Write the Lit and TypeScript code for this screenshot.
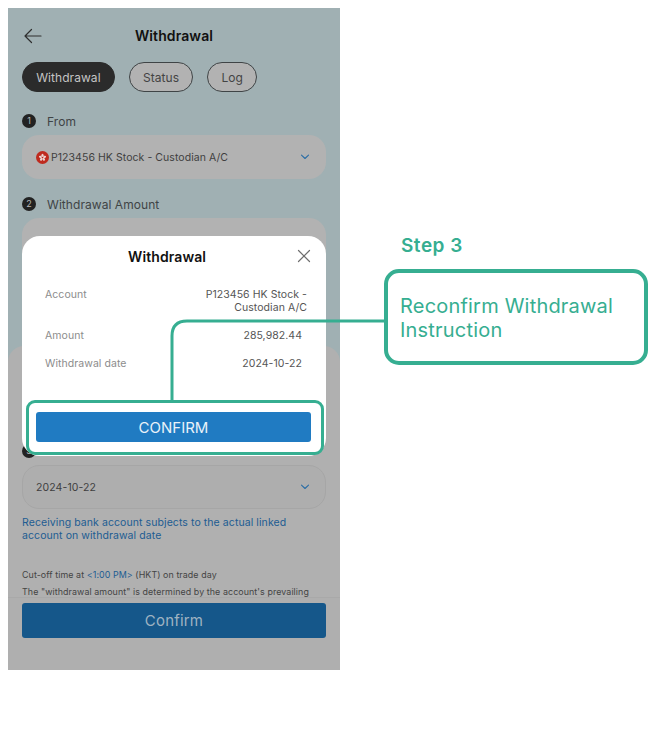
import { LitElement, html, css, svg } from "lit";
import { customElement } from "lit/decorators.js";

const chevron = html`<svg class="chev" width="12" height="8" viewBox="0 0 12 8" fill="none"><path d="M2.500 2.200l3.500 3.300 3.500-3.300" stroke="#2b6ea6" stroke-width="1.100" stroke-linecap="round" stroke-linejoin="round"/></svg>`;

const petals = [0, 72, 144, 216, 288].map(
  (a) => svg`<ellipse cx="7" cy="4.700" rx="1.200" ry="1.700" fill="#ecd3d0" transform="rotate(${a} 7 7)"/>`
);

@customElement("app-root")
export class AppRoot extends LitElement {
  static styles = css`
    :host {
      display: block;
      position: relative;
      width: 670px;
      height: 731px;
      overflow: hidden;
      background: #fff;
      font-family: Inter, "Liberation Sans", sans-serif;
      color: #3a3a3a;
    }
    .phone {
      position: relative;
      margin: 8px 0 0 8px;
      width: 332px;
      height: 662px;
      overflow: hidden;
      background: #a0b0b3;
      display: flex;
      flex-direction: column;
    }
    .top {
      height: 338px;
      flex: none;
      padding: 0 14px;
      box-sizing: border-box;
    }
    .head {
      height: 54px;
      display: flex;
      align-items: center;
      justify-content: center;
      position: relative;
    }
    .back {
      position: absolute;
      left: 1px;
      top: 19px;
    }
    .title,
    .mhead {
      font-size: 14px;
      font-weight: 600;
      color: #111;
      letter-spacing: 0.1px;
    }
    .tabs {
      display: flex;
      gap: 14px;
      height: 30px;
    }
    .tab {
      box-sizing: border-box;
      height: 30px;
      padding: 0 13.200px;
      border: 1px solid #3f4446;
      border-radius: 15px;
      background: #b2b2b2;
      font-size: 12px;
      line-height: 30px;
      color: #444;
      letter-spacing: 0.06px;
    }
    .tab.on {
      background: #2b2b2b;
      border-color: #2b2b2b;
      color: #c4c4c4;
    }
    .step {
      display: flex;
      align-items: center;
      gap: 11px;
      height: 16px;
      font-size: 12px;
      color: #3f4446;
      letter-spacing: 0.06px;
    }
    .num {
      width: 14px;
      height: 14px;
      border-radius: 50%;
      background: #222;
      color: #b8b8b8;
      font-size: 9px;
      line-height: 14px;
      text-align: center;
      flex: none;
    }
    .s1 {
      margin-top: 21px;
    }
    .s2 {
      margin-top: 17px;
    }
    .field {
      box-sizing: border-box;
      height: 44px;
      margin-top: 6px;
      border-radius: 17px;
      background: #b2b2b2;
      padding: 0 15px 0 14px;
      display: flex;
      align-items: center;
      justify-content: space-between;
      font-size: 10.500px;
      color: #3f3f3f;
      letter-spacing: 0.06px;
    }
    .acct {
      display: flex;
      align-items: center;
      gap: 2px;
    }
    .chev {
      flex: none;
    }
    .amount {
      height: 90px;
    }
    .sheet {
      flex: 1;
      background: #b0b0b0;
      border-radius: 16px 16px 0 0;
      padding: 97px 14px 0;
      position: relative;
      display: flex;
      flex-direction: column;
      overflow: hidden;
    }
    .date {
      flex: none;
      background: #aeaeae;
      border: 1px solid #a6a6a6;
      padding: 0 14px 0 13px;
      letter-spacing: 0.1px;
    }
    .note {
      margin-top: 8px;
      font-size: 10.500px;
      line-height: 12.500px;
      color: #215c92;
      letter-spacing: 0.08px;
    }
    .fine {
      font-size: 8.900px;
      line-height: 12px;
      color: #444;
      letter-spacing: 0.08px;
      white-space: nowrap;
    }
    .cut {
      margin-top: 27px;
    }
    .fine b {
      font-weight: 400;
      color: #215c92;
    }
    .rule {
      margin-top: 5px;
    }
    .foot {
      position: absolute;
      left: 0;
      right: 0;
      bottom: 0;
      height: 73px;
      background: #afafaf;
      border-top: 1px solid #a9a9a9;
      box-sizing: border-box;
      padding: 5px 14px 0;
    }
    .big {
      height: 35px;
      border-radius: 3px;
      background: #15578a;
      color: #9fb3c2;
      font-size: 15px;
      line-height: 35px;
      text-align: center;
      letter-spacing: 0.2px;
    }
    .modal {
      position: absolute;
      left: 22px;
      top: 236px;
      width: 304px;
      height: 220px;
      background: #fff;
      border-radius: 18px;
      box-sizing: border-box;
    }
    .mhead {
      height: 41px;
      display: flex;
      align-items: center;
      padding-left: 106px;
      position: relative;
    }
    .close {
      position: absolute;
      left: 275px;
      top: 13px;
    }
    .rows {
      padding: 11px 19px 0 23px;
      font-size: 10.500px;
      line-height: 13px;
      letter-spacing: 0.06px;
    }
    .row {
      display: flex;
      justify-content: space-between;
      color: #555;
    }
    .row span:first-child {
      color: #8c8c8c;
    }
    .row.a {
      padding-right: 5px;
      margin-top: 15px;
    }
    .val1 {
      text-align: right;
    }
    .mbtn {
      position: absolute;
      left: 14px;
      top: 176px;
      width: 275px;
      height: 30px;
      border-radius: 3px;
      background: #207bc2;
      color: #e9f2f9;
      font-size: 15px;
      line-height: 32px;
      text-align: center;
    }
    .hilite {
      position: absolute;
      left: 26px;
      top: 400px;
      width: 298px;
      height: 54.500px;
      box-sizing: border-box;
      border: 3.500px solid #36ae91;
      border-radius: 9px;
    }
    .wire {
      position: absolute;
      left: 169px;
      top: 318px;
    }
    .stepname {
      position: absolute;
      left: 401px;
      top: 235px;
      font-size: 19px;
      line-height: 22px;
      font-weight: 600;
      color: #36ae91;
      letter-spacing: 0.5px;
    }
    .callout {
      position: absolute;
      left: 384px;
      top: 269px;
      width: 264px;
      height: 96px;
      box-sizing: border-box;
      border: 4px solid #36ae91;
      border-radius: 15px;
      padding: 21px 12px 0 12px;
      font-size: 20px;
      line-height: 24px;
      color: #36ae91;
      letter-spacing: 0.2px;
    }
  `;

  render() {
    return html`
      <div class="phone">
        <div class="top">
          <div class="head">
            <svg class="back" width="20" height="18" viewBox="0 0 20 18" fill="none">
              <path d="M18 9H2M8.500 2.500L2 9l6.500 6.500" stroke="#2e2e2e" stroke-width="1.200" stroke-linecap="round" stroke-linejoin="round"/>
            </svg>
            <span class="title">Withdrawal</span>
          </div>
          <div class="tabs">
            <div class="tab on">Withdrawal</div>
            <div class="tab">Status</div>
            <div class="tab">Log</div>
          </div>
          <div class="step s1"><span class="num">1</span>From</div>
          <div class="field">
            <span class="acct">
              <svg width="13" height="13" viewBox="0 0 14 14"><circle cx="7" cy="7" r="7" fill="#bf2a1e"/>${petals}</svg>
              P123456 HK Stock - Custodian A/C
            </span>
            ${chevron}
          </div>
          <div class="step s2"><span class="num">2</span>Withdrawal Amount</div>
          <div class="field amount"></div>
        </div>
        <div class="sheet">
          <div class="step"><span class="num">3</span>Withdrawal date</div>
          <div class="field date">2024-10-22 ${chevron}</div>
          <div class="note">Receiving bank account subjects to the actual linked account on withdrawal date</div>
          <div class="fine cut">Cut-off time at <b>&lt;1:00 PM&gt;</b> (HKT) on trade day</div>
          <div class="fine rule">The "withdrawal amount" is determined by the account's prevailing</div>
          <div class="foot"><div class="big">Confirm</div></div>
        </div>
      </div>

      <div class="modal">
        <div class="mhead">
          Withdrawal
          <svg class="close" width="14" height="14" viewBox="0 0 14 14" fill="none">
            <path d="M1.500 1.500l11 11M12.500 1.500l-11 11" stroke="#6e6e6e" stroke-width="1.200" stroke-linecap="round"/>
          </svg>
        </div>
        <div class="rows">
          <div class="row"><span>Account</span><span class="val1">P123456 HK Stock -<br />Custodian A/C</span></div>
          <div class="row a"><span>Amount</span><span>285,982.44</span></div>
          <div class="row a"><span>Withdrawal date</span><span>2024-10-22</span></div>
        </div>
        <div class="mbtn">CONFIRM</div>
      </div>
      <svg class="wire" width="218" height="86" viewBox="0 0 218 86" fill="none">
        <path d="M216 3H18Q3 3 3 18V85" stroke="#36ae91" stroke-width="3"/>
      </svg>
      <div class="hilite"></div>
      <div class="stepname">Step 3</div>
      <div class="callout">Reconfirm Withdrawal Instruction</div>
    `;
  }
}
